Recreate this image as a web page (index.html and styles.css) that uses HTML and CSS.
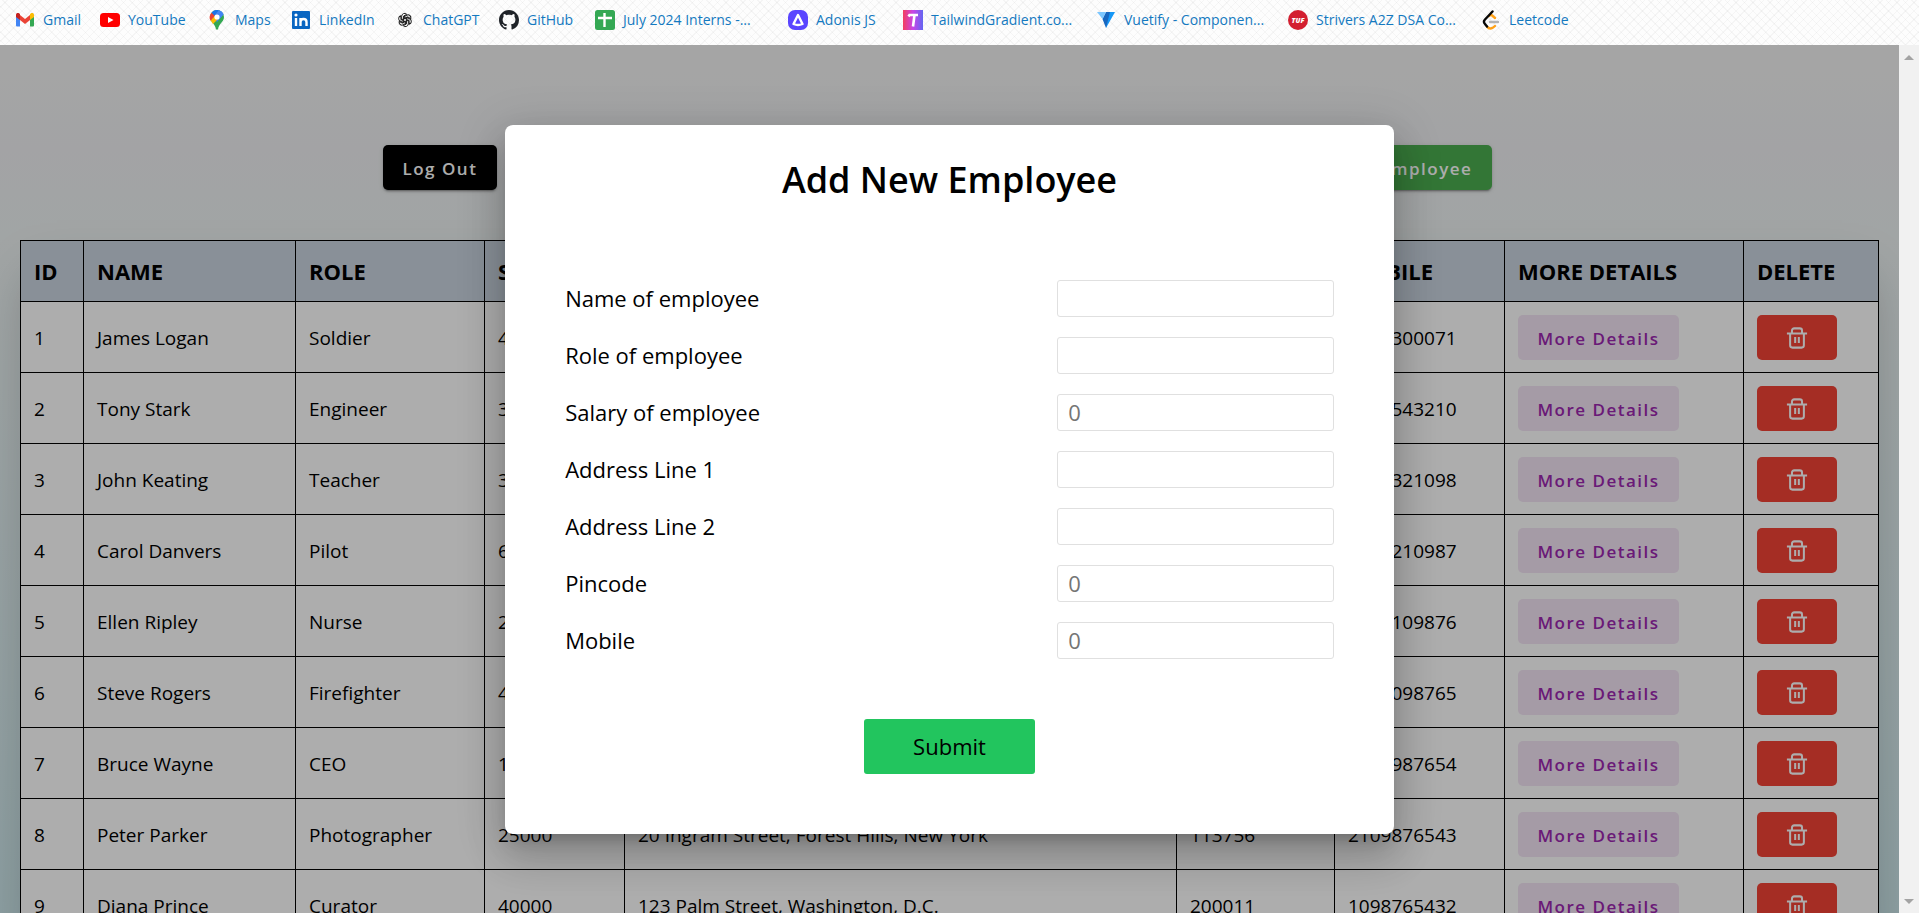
FILE: index.html
```html
<!DOCTYPE html>
<html lang="en">
<head>
<meta charset="utf-8">
<title>Employees</title>
<link rel="stylesheet" href="styles.css">
</head>
<body>
<svg class="sprite" aria-hidden="true">
  <symbol id="trash" viewBox="0 0 24 24"><path d="M1 7h22M4.500 7v13a2.500 2.500 0 0 0 2.500 2.500h10a2.500 2.500 0 0 0 2.500-2.500V7M6.500 6.500V4a2.500 2.500 0 0 1 2.500-2.500h6a2.500 2.500 0 0 1 2.500 2.500v2.500M10 11v6.500M14 11v6.500" fill="none" stroke="currentColor" stroke-width="2.200" stroke-linejoin="round"/></symbol>
</svg>

<nav class="bookmarks" aria-label="Bookmarks">
  <a class="bookmark" href="#"><svg viewBox="0 0 20 20"><path d="M1 5.500V15.500a1 1 0 0 0 1 1h3V9z" fill="#4285f4"/><path d="M19 5.500V15.500a1 1 0 0 1-1 1h-3V9z" fill="#34a853"/><path d="M5 5l5 4 5-4v5l-5 4-5-4z" fill="#ea4335"/><path d="M1 6.500V5c0-2 2-2.500 3.300-1.500L5 4v6L1 7z" fill="#c5221f"/><path d="M19 6.500V5c0-2-2-2.500-3.300-1.500L15 4v6l4-3z" fill="#fbbc04"/></svg>Gmail</a>
  <a class="bookmark" href="#"><svg viewBox="0 0 20 20"><rect y="3" width="20" height="14" rx="3.500" fill="#f00"/><path d="M8 7l5.500 3L8 13z" fill="#fff"/></svg>YouTube</a>
  <a class="bookmark" href="#"><svg viewBox="0 0 20 20"><path d="M3 7a7 7 0 0 1 14 0c0 5-5 6-6 12.500H9C8 13 3 12 3 7z" fill="#34a853"/><path d="M4.500 2.700A7 7 0 0 1 12 .3L7 7z" fill="#1a73e8"/><path d="M12 .3a7 7 0 0 1 4.500 4L10 12 7 8z" fill="#4285f4"/><path d="M4.500 2.700L8 6l-4.200 5A7 7 0 0 1 4.500 2.700z" fill="#ea4335"/><path d="M3.800 10.500L12 1l1 6-7 7z" fill="#fbbc04"/><path d="M12 .3a7 7 0 0 1 4.500 4l-4 4.500-4.500-4z" fill="#4285f4"/><circle cx="10" cy="7" r="2.600" fill="#fff"/></svg>Maps</a>
  <a class="bookmark" href="#"><svg viewBox="0 0 20 20"><rect x="1" y="1" width="18" height="18" rx="1" fill="#0a66c2"/><path d="M5 8v8M9.500 8v8M9.500 12c0-4 6-4 6 0v4" stroke="#fff" stroke-width="2.400" fill="none"/><circle cx="5" cy="5" r="1.600" fill="#fff"/></svg>LinkedIn</a>
  <a class="bookmark" href="#"><svg viewBox="-2 -2 24 24"><g fill="none" stroke="#222" stroke-width="1.200" stroke-linejoin="round"><path id="petal" d="M10 7.500L6 9.800V5.500a3.500 3.500 0 0 1 6-2.400L8.300 5.300v5.500"/><use href="#petal" transform="rotate(60 10 10)"/><use href="#petal" transform="rotate(120 10 10)"/><use href="#petal" transform="rotate(180 10 10)"/><use href="#petal" transform="rotate(240 10 10)"/><use href="#petal" transform="rotate(300 10 10)"/></g></svg>ChatGPT</a>
  <a class="bookmark" href="#"><svg viewBox="0 0 16 16"><path fill="#1f2328" d="M8 0C3.580 0 0 3.580 0 8c0 3.540 2.290 6.530 5.470 7.590.4.070.55-.17.55-.38 0-.19-.01-.82-.01-1.490-2.010.37-2.530-.49-2.690-.94-.09-.23-.48-.94-.82-1.130-.28-.15-.68-.52-.01-.53.63-.01 1.080.58 1.230.82.72 1.210 1.870.87 2.330.66.07-.52.28-.87.51-1.070-1.780-.2-3.640-.89-3.640-3.950 0-.87.31-1.590.82-2.150-.08-.2-.36-1.020.08-2.120 0 0 .67-.21 2.200.82.64-.18 1.320-.27 2-.27s1.360.09 2 .27c1.530-1.040 2.200-.82 2.200-.82.44 1.100.16 1.920.08 2.120.51.56.82 1.270.82 2.150 0 3.070-1.870 3.750-3.650 3.950.29.25.54.73.54 1.480 0 1.070-.01 1.930-.01 2.200 0 .21.15.46.55.38A8.010 8.010 0 0 0 16 8c0-4.420-3.580-8-8-8z"/></svg>GitHub</a>
  <a class="bookmark" href="#"><svg viewBox="0 0 20 20"><rect width="20" height="20" rx="2.500" fill="#34a853"/><path d="M9.500 3v14M3 8h14" stroke="#fff" stroke-width="2.400"/></svg>July 2024 Interns -...</a>
  <a class="bookmark" href="#"><svg viewBox="0 0 20 20"><rect width="20" height="20" rx="7" fill="#5a45ff"/><path d="M10 5l4.500 9c-3 1.300-6 1.300-9 0z" fill="none" stroke="#fff" stroke-width="2.400" stroke-linejoin="round"/></svg>Adonis JS</a>
  <a class="bookmark" href="#"><svg viewBox="0 0 20 20"><defs><linearGradient id="tg"><stop stop-color="#f43f5e"/><stop offset=".5" stop-color="#c845e8"/><stop offset="1" stop-color="#6366f1"/></linearGradient></defs><path d="M0 0h20v20H0z" fill="url(#tg)"/><path d="M5.500 6.500l1-1.500H15M11.500 5L10 16.500" fill="none" stroke="#fff" stroke-width="2.600"/></svg>TailwindGradient.co...</a>
  <a class="bookmark" href="#"><svg viewBox="0 0 20 20"><path d="M10 2h9l-9 16z" fill="#1697f6"/><path d="M10 2h4l-4 16-3.500-9z" fill="#1867c0"/><path d="M6.500 9L10 2H1z" fill="#7bc6ff"/></svg>Vuetify - Componen...</a>
  <a class="bookmark" href="#"><svg viewBox="0 0 20 20"><circle cx="10" cy="10" r="10" fill="#d31f30"/><text x="10" y="12.500" class="badge-text">TUF</text></svg>Strivers A2Z DSA Co...</a>
  <a class="bookmark" href="#"><svg viewBox="0 0 20 20"><g fill="none" stroke-width="2.400" stroke-linecap="round"><path d="M8 6l2-1.500 4 3.500M6 16.500c2 3 5 2.500 8-.5" stroke="#ffa116"/><path d="M11.500 1.500L4 9.500c-1.500 1.700-1 3.500 0 4.500l2 2.500" stroke="#070706"/><path d="M9 12h8" stroke="#b3b3b3"/></g></svg>Leetcode</a>
</nav>

<div class="viewport">
  <main class="page">
    <header class="toolbar">
      <button class="btn btn-dark" type="button">Log Out</button>
      <button class="btn btn-green" type="button">Add Employee</button>
    </header>
    <table class="employees">
      <colgroup>
        <col class="c-id"><col class="c-name"><col class="c-role"><col class="c-salary"><col><col class="c-pin"><col class="c-mobile"><col class="c-more"><col class="c-delete">
      </colgroup>
      <thead>
        <tr><th>ID</th><th>NAME</th><th>ROLE</th><th>SALARY</th><th>ADDRESS</th><th>PINCODE</th><th>MOBILE</th><th>MORE DETAILS</th><th>DELETE</th></tr>
      </thead>
      <tbody>
        <tr><td>1</td><td>James Logan</td><td>Soldier</td><td>45000</td><td>1407 Graymalkin Lane, Salem Center</td><td>105600</td><td>9876300071</td><td><button class="btn btn-tonal" type="button">More Details</button></td><td><button class="btn btn-red" type="button" aria-label="Delete"><svg><use href="#trash"/></svg></button></td></tr>
        <tr><td>2</td><td>Tony Stark</td><td>Engineer</td><td>35000</td><td>10880 Malibu Point, Malibu</td><td>902650</td><td>9876543210</td><td><button class="btn btn-tonal" type="button">More Details</button></td><td><button class="btn btn-red" type="button" aria-label="Delete"><svg><use href="#trash"/></svg></button></td></tr>
        <tr><td>3</td><td>John Keating</td><td>Teacher</td><td>30000</td><td>Welton Academy, Vermont</td><td>197010</td><td>8765321098</td><td><button class="btn btn-tonal" type="button">More Details</button></td><td><button class="btn btn-red" type="button" aria-label="Delete"><svg><use href="#trash"/></svg></button></td></tr>
        <tr><td>4</td><td>Carol Danvers</td><td>Pilot</td><td>60000</td><td>12 Harbor Road, Boston</td><td>210800</td><td>6543210987</td><td><button class="btn btn-tonal" type="button">More Details</button></td><td><button class="btn btn-red" type="button" aria-label="Delete"><svg><use href="#trash"/></svg></button></td></tr>
        <tr><td>5</td><td>Ellen Ripley</td><td>Nurse</td><td>28000</td><td>8 Station Street, Olympia</td><td>985010</td><td>5432109876</td><td><button class="btn btn-tonal" type="button">More Details</button></td><td><button class="btn btn-red" type="button" aria-label="Delete"><svg><use href="#trash"/></svg></button></td></tr>
        <tr><td>6</td><td>Steve Rogers</td><td>Firefighter</td><td>40000</td><td>569 Leaman Place, Brooklyn</td><td>112010</td><td>4321098765</td><td><button class="btn btn-tonal" type="button">More Details</button></td><td><button class="btn btn-red" type="button" aria-label="Delete"><svg><use href="#trash"/></svg></button></td></tr>
        <tr><td>7</td><td>Bruce Wayne</td><td>CEO</td><td>100000</td><td>1007 Mountain Drive, Gotham</td><td>100070</td><td>3210987654</td><td><button class="btn btn-tonal" type="button">More Details</button></td><td><button class="btn btn-red" type="button" aria-label="Delete"><svg><use href="#trash"/></svg></button></td></tr>
        <tr><td>8</td><td>Peter Parker</td><td>Photographer</td><td>25000</td><td>20 Ingram Street, Forest Hills, New York</td><td>113756</td><td>2109876543</td><td><button class="btn btn-tonal" type="button">More Details</button></td><td><button class="btn btn-red" type="button" aria-label="Delete"><svg><use href="#trash"/></svg></button></td></tr>
        <tr><td>9</td><td>Diana Prince</td><td>Curator</td><td>40000</td><td>123 Palm Street, Washington, D.C.</td><td>200011</td><td>1098765432</td><td><button class="btn btn-tonal" type="button">More Details</button></td><td><button class="btn btn-red" type="button" aria-label="Delete"><svg><use href="#trash"/></svg></button></td></tr>
      </tbody>
    </table>
  </main>

  <div class="overlay">
    <form class="dialog" role="dialog" aria-labelledby="dialog-title">
      <h1 class="dialog-title" id="dialog-title">Add New Employee</h1>
      <div class="fields">
        <div class="field"><label for="name">Name of employee</label><input id="name" type="text"></div>
        <div class="field"><label for="role">Role of employee</label><input id="role" type="text"></div>
        <div class="field"><label for="salary">Salary of employee</label><input id="salary" type="text" inputmode="numeric" placeholder="0"></div>
        <div class="field"><label for="address1">Address Line 1</label><input id="address1" type="text"></div>
        <div class="field"><label for="address2">Address Line 2</label><input id="address2" type="text"></div>
        <div class="field"><label for="pincode">Pincode</label><input id="pincode" type="text" inputmode="numeric" placeholder="0"></div>
        <div class="field"><label for="mobile">Mobile</label><input id="mobile" type="text" inputmode="numeric" placeholder="0"></div>
      </div>
      <button class="submit" type="submit">Submit</button>
    </form>
  </div>

  <div class="scrollbar" aria-hidden="true">
    <svg viewBox="0 0 10 6"><path d="M0 6l5-5 5 5z"/></svg>
    <svg viewBox="0 0 10 6"><path d="M0 0l5 5 5-5z"/></svg>
  </div>
</div>
</body>
</html>
```
FILE: styles.css
```css
*, *::before, *::after { box-sizing: border-box; }

body {
  margin: 0;
  height: 100vh;
  display: flex;
  flex-direction: column;
  overflow: hidden;
  font-family: "Open Sans", "Noto Sans", sans-serif;
  color: #000;
}

button, input { font: inherit; }

.sprite { display: none; }

/* Bookmarks bar */
.bookmarks {
  flex: none;
  display: grid;
  grid-template-columns: 85px 107px 84px 104px 104px 96px 193px 115px 193px 192px 193px auto;
  align-items: center;
  height: 45px;
  padding: 0 15px 6px;
  background:
    repeating-linear-gradient(45deg, transparent 0 3px, rgba(0, 0, 0, .03) 3px 4px, transparent 4px 6px),
    repeating-linear-gradient(-45deg, transparent 0 3px, rgba(0, 0, 0, .03) 3px 4px, transparent 4px 6px),
    #fdfdfd;
}

.bookmark {
  display: flex;
  align-items: center;
  gap: 8px;
  font-size: 14px;
  line-height: 20px;
  color: #1479c0;
  text-decoration: none;
  white-space: nowrap;
}

.bookmark svg { flex: none; width: 20px; height: 20px; }

.badge-text {
  font: italic 800 7px "Open Sans", sans-serif;
  fill: #fff;
  text-anchor: middle;
}

/* Page under the dialog */
.viewport {
  flex: 1;
  min-height: 0;
  display: grid;
  grid-template-columns: 1fr 20px;
}

.page, .overlay { grid-area: 1 / 1; min-height: 0; }

.page {
  overflow: hidden;
  padding: 100px 20px 0;
  background: linear-gradient(#f4f4f4, #f0f1f3 12%, #eef3f3 22%, #cfeaee);
}

.toolbar {
  display: flex;
  justify-content: space-between;
  padding: 0 20.800% 0 19.500%;
  margin-bottom: 50px;
}

.btn {
  display: flex;
  align-items: center;
  justify-content: center;
  height: 45px;
  padding: 2px 20px 0;
  border: 0;
  border-radius: 5px;
  font-size: 17px;
  font-weight: 600;
  letter-spacing: 1.500px;
  white-space: nowrap;
}

.btn-dark, .btn-green {
  color: #fff;
  box-shadow: 0 3px 1px -2px rgba(0, 0, 0, .2), 0 2px 2px rgba(0, 0, 0, .14), 0 1px 5px rgba(0, 0, 0, .12);
}

.btn-dark { background: #000; }
.btn-green { background: #4caf50; }
.btn-tonal { width: 161px; background: #f3e5f5; color: #9c27b0; }
.btn-red { width: 80px; padding-top: 0; background: #f44336; color: #fff; }
.btn-red svg { width: 22px; height: 22px; }

.employees {
  width: 100%;
  table-layout: fixed;
  border-collapse: collapse;
  background: #fff;
  font-size: 19px;
  line-height: 34px;
  box-shadow: 0 25px 50px -12px rgba(0, 0, 0, .25);
}

.employees th, .employees td {
  padding: 13px 12px 12px 13px;
  border: 1px solid #000;
  text-align: left;
  white-space: nowrap;
}

.employees th {
  padding: 13px;
  background: #cbd5e1;
  font-weight: 700;
  font-size: 22px;
}

.c-id { width: 63px; }
.c-name { width: 212px; }
.c-role { width: 189px; }
.c-salary { width: 140px; }
.c-pin { width: 158px; }
.c-mobile { width: 170px; }
.c-more { width: 239px; }
.c-delete { width: 135px; }

/* Dialog */
.overlay {
  z-index: 1;
  display: flex;
  align-items: center;
  justify-content: center;
  background: rgba(0, 0, 0, .32);
}

.dialog {
  width: 46.800%;
  display: flex;
  flex-direction: column;
  padding: 30px 60px 60px;
  border-radius: 8px;
  background: #fff;
  box-shadow: 0 11px 15px -7px rgba(0, 0, 0, .2), 0 24px 38px 3px rgba(0, 0, 0, .14), 0 9px 46px 8px rgba(0, 0, 0, .12);
  font-size: 22px;
}

.dialog-title {
  margin: 0 0 75px;
  font-size: 36px;
  line-height: 50px;
  font-weight: 600;
  text-align: center;
}

.fields { display: grid; gap: 20px; }

.field {
  display: flex;
  align-items: center;
  justify-content: space-between;
  height: 37px;
  line-height: 34px;
}

.field input {
  width: 36%;
  height: 37px;
  padding: 0 10px;
  border: 1px solid #e0e0e0;
  border-radius: 3px;
  background: #fff;
}

.field input::placeholder { color: #757575; opacity: 1; }

.submit {
  align-self: center;
  margin-top: 60px;
  height: 55px;
  padding: 0 49px;
  border: 0;
  border-radius: 3px;
  background: #22c55e;
  color: #000;
}

.scrollbar {
  display: flex;
  flex-direction: column;
  justify-content: space-between;
  align-items: center;
  padding: 9px 0 8px;
  background: #f1f1f1;
}

.scrollbar svg { width: 10px; height: 6px; fill: #a3a3a3; }
```
